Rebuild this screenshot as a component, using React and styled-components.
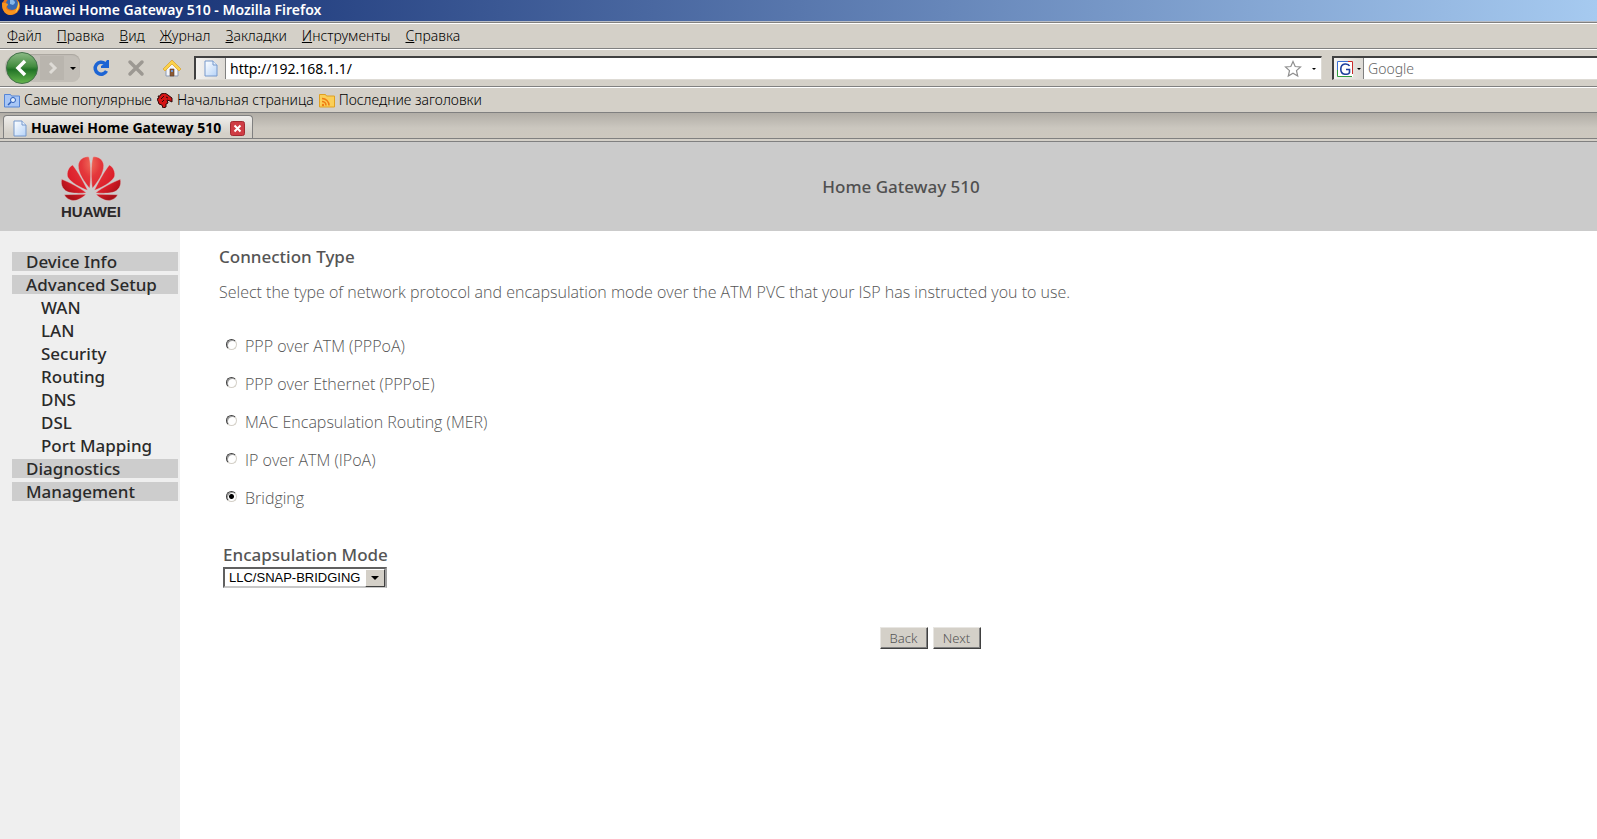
import React, { useState } from 'react';
import styled, { createGlobalStyle } from 'styled-components';

const chrome = '#d4d0c8';
const ui = '"Noto Sans", "Open Sans", sans-serif';

const GlobalStyle = createGlobalStyle`
  *, *::before, *::after { box-sizing: border-box; }
  body { margin: 0; background: #fff; font-family: ${ui}; }
  button, input, select { font-family: inherit; }
  svg { display: block; flex: none; }
`;

const Window = styled.div`
  display: flex;
  flex-direction: column;
  min-height: 100vh;
`;

const TitleBar = styled.header`
  display: flex;
  align-items: center;
  gap: 3px;
  height: 22px;
  padding: 0 0 2px 1px;
  overflow: hidden;
  color: #fff;
  font-size: 14px;
  font-weight: 600;
  line-height: 20px;
  background: linear-gradient(90deg, #0a246a, #a6caf0);
  border-bottom: 1px solid #b9bcc4;
`;

const Bar = styled.div`
  display: flex;
  align-items: center;
  background: ${chrome};
  border-top: 1px solid #fff;
  border-bottom: 1px solid #808080;
`;

const MenuBar = styled(Bar).attrs({ as: 'nav' })`
  height: 27px;
  gap: 15px;
  padding-left: 7px;
  border-top: 1px solid #808080;
  box-shadow: inset 0 1px #fff;
`;

const MenuButton = styled.button`
  padding: 0;
  border: 0;
  background: none;
  color: #000;
  font-size: 14px;
  font-weight: 300;
  line-height: 20px;
  &::first-letter { text-decoration: underline; }
`;

const NavBar = styled(Bar)`
  height: 38px;
  padding-left: 5px;
`;

const HistoryGroup = styled.div`
  display: flex;
  align-items: center;
  height: 28px;
  margin-right: 10px;
  border-radius: 14px 8px 8px 14px;
  background: #c2beb7;
  box-shadow: inset 0 1px 1px #aaa69f;
`;

const IconButton = styled.button`
  display: flex;
  align-items: center;
  justify-content: center;
  width: ${p => p.$w || 36}px;
  height: 32px;
  padding: 0;
  border: 0;
  background: none;
`;

const Field = styled.label`
  display: flex;
  align-items: center;
  flex: ${p => (p.$w ? `0 1 ${p.$w}px` : '1 1 0')};
  min-width: 0;
  height: 24px;
  background: #fff;
  border: 1px solid #808080;
  border-top: 2px solid #404040;
  border-left: 2px solid #404040;
  border-bottom-color: #dedbd5;
  border-right-color: ${p => (p.$open ? '#fff' : '#dedbd5')};
  ${p => p.$open && 'border-right: 0;'}
`;

const Identity = styled.span`
  display: flex;
  align-items: center;
  justify-content: center;
  gap: 4px;
  align-self: stretch;
  width: 30px;
  background: linear-gradient(90deg, #f4f3f1, #dddad5);
  border-right: 1px solid #808080;
`;

const TextInput = styled.input`
  flex: 1;
  min-width: 0;
  padding: 0 4px;
  border: 0;
  outline: 0;
  background: none;
  color: #000;
  font-size: 14px;
  font-weight: ${p => p.$weight || 400};
  line-height: 20px;
  &::placeholder { color: #666; opacity: 1; }
`;

const FieldActions = styled.span`
  display: flex;
  align-items: center;
  gap: 10px;
  padding-right: 5px;
`;

const Gap = styled.span`
  flex: none;
  width: 10px;
`;

const BookmarkBar = styled(Bar)`
  height: 26px;
  gap: 5px;
  padding-left: 4px;
`;

const Bookmark = styled.a`
  display: flex;
  align-items: center;
  gap: 4px;
  color: #000;
  font-size: 14px;
  font-weight: 300;
  line-height: 20px;
  text-decoration: none;
`;

const TabStrip = styled.div`
  display: flex;
  align-items: flex-end;
  height: 26px;
  padding-left: 3px;
  background: linear-gradient(#b1ada6, #cbc7bf 60%, #cdc8bf);
  border-bottom: 1px solid #808080;
`;

const Tab = styled.div`
  display: flex;
  align-items: center;
  gap: 4px;
  height: 23px;
  padding: 2px 7px 0 9px;
  border: 1px solid #808080;
  border-bottom: 0;
  border-radius: 4px 4px 0 0;
  background: linear-gradient(#efeeec, ${chrome} 80%);
  font-size: 14px;
  font-weight: 700;
  line-height: 20px;
`;

const TabTitle = styled.span`
  margin-right: 5px;
`;

const CloseButton = styled.button`
  display: flex;
  padding: 0;
  border: 0;
  background: none;
`;

const TabEdge = styled.div`
  height: 3px;
  background: ${chrome};
  border-bottom: 1px solid #808080;
`;

const SiteHeader = styled.header`
  display: flex;
  align-items: center;
  height: 89px;
  background: #cbcbcb;
`;

const LogoLink = styled.a`
  flex: none;
  width: 205px;
  padding: 0 0 4px 50px;
`;

const ProductName = styled.h1`
  flex: 1;
  margin: 0;
  color: #505050;
  font-size: 17px;
  font-weight: 500;
  line-height: 24px;
  text-align: center;
`;

const Body = styled.div`
  display: flex;
  flex: 1;
`;

const Sidebar = styled.nav`
  flex: none;
  width: 180px;
  padding: 21px 2px 0 12px;
  background: #efefef;
`;

const NavList = styled.ul`
  display: flex;
  flex-direction: column;
  gap: 4px;
  margin: 0;
  padding: 0;
  list-style: none;
`;

const NavLink = styled.a`
  display: block;
  padding-left: ${p => (p.$sub ? 29 : 14)}px;
  background: ${p => (p.$sub ? 'none' : '#cdcdcd')};
  color: #2a2a2a;
  font-size: 17px;
  font-weight: 500;
  line-height: 19px;
  text-decoration: none;
`;

const Main = styled.main`
  flex: 1;
  padding: 14px 0 24px 39px;
  color: #555;
`;

const Heading = styled.h2`
  margin: 0;
  font-size: 17px;
  font-weight: 500;
  line-height: 24px;
`;

const Intro = styled.p`
  margin: 11px 0 0;
  font-family: "Open Sans", sans-serif;
  font-size: 16px;
  font-weight: 300;
  line-height: 24px;
`;

const Options = styled.fieldset`
  display: flex;
  flex-direction: column;
  align-items: flex-start;
  gap: 14px;
  margin: 30px 0 0;
  padding: 0 0 0 7px;
  border: 0;
`;

const Option = styled.label`
  display: flex;
  align-items: center;
  gap: 8px;
  font-family: "Open Sans", sans-serif;
  font-size: 16px;
  font-weight: 300;
  line-height: 24px;
`;

const Radio = styled.input`
  appearance: none;
  width: 11px;
  height: 11px;
  margin: 0 0 3px;
  border: 1px solid;
  border-color: #404040 #d4d0c8 #d4d0c8 #404040;
  border-radius: 50%;
  background: #fff;
  box-shadow: inset 1px 1px #a0a0a0;
  &:checked { background: radial-gradient(circle, #000 2px, #fff 3px); }
`;

const ModeGroup = styled.div`
  display: flex;
  flex-direction: column;
  align-items: flex-start;
  margin: 33px 0 0 4px;
`;

const ModeLabel = styled.label`
  font-size: 17px;
  font-weight: 500;
  line-height: 24px;
`;

const SelectBox = styled.span`
  display: flex;
  align-items: center;
  height: 21px;
  border: 2px solid;
  border-color: #606060 #a0a0a0 #c8c8c8 #606060;
  background: #fff;
`;

const Select = styled.select`
  appearance: none;
  width: 160px;
  height: 17px;
  margin-right: -20px;
  padding: 0 20px 0 4px;
  border: 0;
  background: none;
  color: #000;
  font-family: "Liberation Sans", Arial, sans-serif;
  font-size: 13px;
  line-height: 17px;
`;

const SelectArrow = styled.span`
  display: flex;
  align-items: center;
  justify-content: center;
  width: 20px;
  height: 18px;
  border: 1px solid;
  border-color: #fff #404040 #404040 #fff;
  background: ${chrome};
  pointer-events: none;
`;

const Actions = styled.div`
  display: flex;
  justify-content: center;
  gap: 5px;
  margin: 39px 0 0;
  padding-left: 44px;
`;

const ActionButton = styled.button`
  width: 48px;
  height: 22px;
  padding: 0;
  border: 1px solid;
  border-color: #e8e6e2 #404040 #404040 #e8e6e2;
  box-shadow: inset -1px -1px #808080;
  background: ${chrome};
  color: #555;
  font-size: 13px;
  font-weight: 300;
  line-height: 18px;
`;

const FirefoxIcon = () => (
  <svg width="20" height="20" viewBox="0 0 20 20" aria-hidden="true">
    <circle cx="10" cy="6" r="9" fill="#e8711a" />
    <circle cx="11" cy="4" r="6" fill="#3569b4" />
    <path d="M9 0c3-1 5 1 5 3l-2 2-3-1z" fill="#86b7e8" />
    <path d="M1 2c1 2 3 0 6 2 0 2-2 2-2 4 2 4 9 4 12-2 0 5-3 9-8 9S1 10 1 2z" fill="#f7931e" />
    <path d="M17 1c2 4 1 9-3 12 2-4 3-7 3-12z" fill="#fbd34d" />
  </svg>
);

const PageIcon = () => (
  <svg width="14" height="17" viewBox="0 0 14 17" aria-hidden="true">
    <defs>
      <linearGradient id="sheet" x1="0" y1="0" x2="1" y2="1">
        <stop offset="0" stopColor="#fff" />
        <stop offset="1" stopColor="#b5d3f8" />
      </linearGradient>
    </defs>
    <path d="M1 1h8l4 4v11H1z" fill="url(#sheet)" stroke="#7799cc" />
    <path d="M9 1v4h4" fill="#e6f0fc" stroke="#7799cc" />
  </svg>
);

const BackIcon = () => (
  <svg width="34" height="34" viewBox="0 0 34 34" aria-hidden="true">
    <defs>
      <linearGradient id="green" x1="0" y1="0" x2="0" y2="1">
        <stop offset="0" stopColor="#8dbb87" />
        <stop offset=".45" stopColor="#438c3f" />
        <stop offset=".55" stopColor="#217326" />
        <stop offset="1" stopColor="#68b74f" />
      </linearGradient>
    </defs>
    <circle cx="17" cy="17" r="15.500" fill="url(#green)" stroke="#44714a" />
    <path d="M20 10l-7 7 7 7" fill="none" stroke="#fff" strokeWidth="3.500" />
  </svg>
);

const ForwardIcon = () => (
  <svg width="24" height="24" viewBox="0 0 24 24" aria-hidden="true">
    <rect width="24" height="24" fill="#b9b5ae" />
    <path d="M10 7l5 5-5 5" fill="none" stroke="#dedbd6" strokeWidth="3" />
  </svg>
);

const Caret = ({ size = 6 }) => (
  <svg width={size} height={size / 2} viewBox="0 0 6 3" aria-hidden="true">
    <path d="M0 0h6L3 3z" fill="#000" />
  </svg>
);

const ReloadIcon = () => (
  <svg width="18" height="18" viewBox="0 0 18 18" aria-hidden="true">
    <path d="M13 4.500A6 6 0 1 0 14.500 12" fill="none" stroke="#1c64d4" strokeWidth="3.500" />
    <path d="M17 1v8H9V7l3-2 3-4z" fill="#1c64d4" />
  </svg>
);

const StopIcon = () => (
  <svg width="18" height="18" viewBox="0 0 18 18" aria-hidden="true">
    <path d="M3 3l12 12M15 3L3 15" stroke="#9c9892" strokeWidth="3.500" strokeLinecap="round" />
  </svg>
);

const HomeIcon = () => (
  <svg width="20" height="18" viewBox="0 0 20 18" aria-hidden="true">
    <path d="M4 9v8h12V9l-6-6z" fill="#f4f6fb" stroke="#8c9bb5" />
    <path d="M10 1L1 10l2 2 7-7 7 7 2-2z" fill="#fbd24a" stroke="#d9a536" strokeWidth=".8" />
    <path d="M8 10h4v7H8z" fill="#8b5a35" stroke="#5e3b22" strokeWidth=".6" />
    <path d="M9 11h2v2H9z" fill="#6d94d2" />
  </svg>
);

const StarIcon = () => (
  <svg width="18" height="18" viewBox="0 0 18 18" aria-hidden="true">
    <path
      d="M9 1.500l2.200 5 5.300.5-4 3.600 1.200 5.400L9 13.200 4.300 16l1.200-5.400-4-3.600 5.300-.5z"
      fill="#fff"
      stroke="#8f8f8f"
      strokeWidth="1.200"
    />
  </svg>
);

const GoogleIcon = () => (
  <svg width="16" height="16" viewBox="0 0 16 16" aria-hidden="true">
    <rect width="16" height="16" fill="#fff" />
    <path d="M.5 12V.5H12" fill="none" stroke="#3b6fd4" />
    <path d="M11 .5h4.500V13" fill="none" stroke="#c92a2a" />
    <path d="M.5 9v6.500H15" fill="none" stroke="#2f9c3c" />
    <path d="M12.500 5C11.500 2.500 4 1.200 3.800 8s8 6 8.700 3.500V8.500H9" fill="none" stroke="#1f3f9c" strokeWidth="1.600" />
  </svg>
);

const SearchFolderIcon = () => (
  <svg width="16" height="15" viewBox="0 0 16 15" aria-hidden="true">
    <path d="M.5 1.500h6l1 1.500h8v11H.5z" fill="#a8c6f5" stroke="#5585d6" />
    <circle cx="9" cy="7" r="2.500" fill="#e4effd" stroke="#2c5db8" />
    <path d="M7 9l-3 3" stroke="#2c5db8" strokeWidth="1.500" />
  </svg>
);

const DinoIcon = () => (
  <svg width="16" height="15" viewBox="0 0 16 15" aria-hidden="true">
    <path d="M4 1l4-1 3 2 4 3v4l-2-1-3-1 1 3-2 1v3l-3 1-1-3-3-1-1-3-1-2 2-1-1-2 2 0z" fill="#d41414" stroke="#2a0808" />
    <path d="M9 4l2 1M5 9l2-2M7 3L4 6" stroke="#2a0808" />
  </svg>
);

const FeedIcon = () => (
  <svg width="16" height="15" viewBox="0 0 16 15" aria-hidden="true">
    <path d="M.5 1.500h6l1 1.500h8v11H.5z" fill="#fbcf57" stroke="#e0a020" />
    <path d="M3 5.500a7 7 0 0 1 7 7M3 8.500a4 4 0 0 1 4 4" fill="none" stroke="#ef7d14" strokeWidth="1.600" />
    <circle cx="4" cy="12" r="1.200" fill="#ef7d14" />
  </svg>
);

const CloseIcon = () => (
  <svg width="15" height="15" viewBox="0 0 15 15" aria-hidden="true">
    <rect x=".5" y=".5" width="14" height="14" rx="2" fill="#cf3c44" stroke="#a32930" />
    <path d="M4.500 4.500l6 6M10.500 4.500l-6 6" stroke="#fff" strokeWidth="2" />
  </svg>
);

const Petals = () => (
  <>
    <path d="M119 130C123 100 124 60 117 36C100 33 87 45 85 60C84 85 104 112 119 130z" />
    <path d="M113 136C101 112 84 80 68 60C56 66 49 82 53 96C64 114 92 128 113 136z" />
    <path d="M109 143C88 128 60 112 35 103C31 122 40 137 58 142C78 146 94 145 109 143z" />
    <path d="M108 148L43 149C52 165 69 169 81 165C92 161 101 155 108 148z" />
  </>
);

const HuaweiLogo = () => (
  <svg width="80" height="80" viewBox="0 0 240 240" role="img" aria-label="Huawei">
    <defs>
      <radialGradient id="petal" gradientUnits="userSpaceOnUse" cx="140" cy="55" r="130">
        <stop offset="0" stopColor="#f48468" />
        <stop offset=".35" stopColor="#e4383c" />
        <stop offset=".7" stopColor="#dc1f2b" />
        <stop offset="1" stopColor="#a81018" />
      </radialGradient>
    </defs>
    <g fill="url(#petal)" stroke="#e6d0d0" strokeWidth="1">
      <Petals />
      <g transform="matrix(-1 0 0 1 246 0)"><Petals /></g>
    </g>
    <text x="123" y="216" textAnchor="middle" fontFamily="Liberation Sans, Arial, sans-serif" fontWeight="700" fontSize="45" fill="#2b2728">
      HUAWEI
    </text>
  </svg>
);

const menus = ['Файл', 'Правка', 'Вид', 'Журнал', 'Закладки', 'Инструменты', 'Справка'];

const bookmarks = [
  ['Самые популярные', SearchFolderIcon],
  ['Начальная страница', DinoIcon],
  ['Последние заголовки', FeedIcon],
];

const sections = [
  { label: 'Device Info' },
  { label: 'Advanced Setup' },
  { label: 'WAN', sub: true },
  { label: 'LAN', sub: true },
  { label: 'Security', sub: true },
  { label: 'Routing', sub: true },
  { label: 'DNS', sub: true },
  { label: 'DSL', sub: true },
  { label: 'Port Mapping', sub: true },
  { label: 'Diagnostics' },
  { label: 'Management' },
];

const protocols = [
  'PPP over ATM (PPPoA)',
  'PPP over Ethernet (PPPoE)',
  'MAC Encapsulation Routing (MER)',
  'IP over ATM (IPoA)',
  'Bridging',
];

export default function App() {
  const [protocol, setProtocol] = useState('Bridging');

  return (
    <Window>
      <GlobalStyle />
      <TitleBar>
        <FirefoxIcon />
        Huawei Home Gateway 510 - Mozilla Firefox
      </TitleBar>
      <MenuBar>
        {menus.map(m => <MenuButton key={m}>{m}</MenuButton>)}
      </MenuBar>
      <NavBar>
        <HistoryGroup>
          <IconButton $w={34} aria-label="Back"><BackIcon /></IconButton>
          <IconButton $w={26} aria-label="Forward"><ForwardIcon /></IconButton>
          <IconButton $w={15} aria-label="History"><Caret /></IconButton>
        </HistoryGroup>
        <IconButton $w={22} aria-label="Reload"><ReloadIcon /></IconButton>
        <IconButton $w={48} aria-label="Stop"><StopIcon /></IconButton>
        <IconButton $w={24} aria-label="Home"><HomeIcon /></IconButton>
        <Gap />
        <Field>
          <Identity><PageIcon /></Identity>
          <TextInput aria-label="Address" defaultValue="http://192.168.1.1/" />
          <FieldActions><StarIcon /><Caret size={4} /></FieldActions>
        </Field>
        <Gap />
        <Field $w={265} $open>
          <Identity><GoogleIcon /><Caret size={4} /></Identity>
          <TextInput aria-label="Search" placeholder="Google" $weight={300} />
        </Field>
      </NavBar>
      <BookmarkBar>
        {bookmarks.map(([label, Icon]) => (
          <Bookmark key={label} href="#"><Icon />{label}</Bookmark>
        ))}
      </BookmarkBar>
      <TabStrip>
        <Tab>
          <PageIcon />
          <TabTitle>Huawei Home Gateway 510</TabTitle>
          <CloseButton aria-label="Close tab"><CloseIcon /></CloseButton>
        </Tab>
      </TabStrip>
      <TabEdge />

      <SiteHeader>
        <LogoLink href="#"><HuaweiLogo /></LogoLink>
        <ProductName>Home Gateway 510</ProductName>
      </SiteHeader>
      <Body>
        <Sidebar>
          <NavList>
            {sections.map(s => (
              <li key={s.label}><NavLink href="#" $sub={s.sub}>{s.label}</NavLink></li>
            ))}
          </NavList>
        </Sidebar>
        <Main>
          <Heading>Connection Type</Heading>
          <Intro>
            Select the type of network protocol and encapsulation mode over the ATM PVC that your ISP has instructed you to use.
          </Intro>
          <Options aria-label="Connection Type">
            {protocols.map(p => (
              <Option key={p}>
                <Radio type="radio" name="protocol" checked={protocol === p} onChange={() => setProtocol(p)} />
                {p}
              </Option>
            ))}
          </Options>
          <ModeGroup>
            <ModeLabel htmlFor="mode">Encapsulation Mode</ModeLabel>
            <SelectBox>
              <Select id="mode"><option>LLC/SNAP-BRIDGING</option></Select>
              <SelectArrow><Caret size={8} /></SelectArrow>
            </SelectBox>
          </ModeGroup>
          <Actions>
            <ActionButton type="button">Back</ActionButton>
            <ActionButton type="button">Next</ActionButton>
          </Actions>
        </Main>
      </Body>
    </Window>
  );
}
